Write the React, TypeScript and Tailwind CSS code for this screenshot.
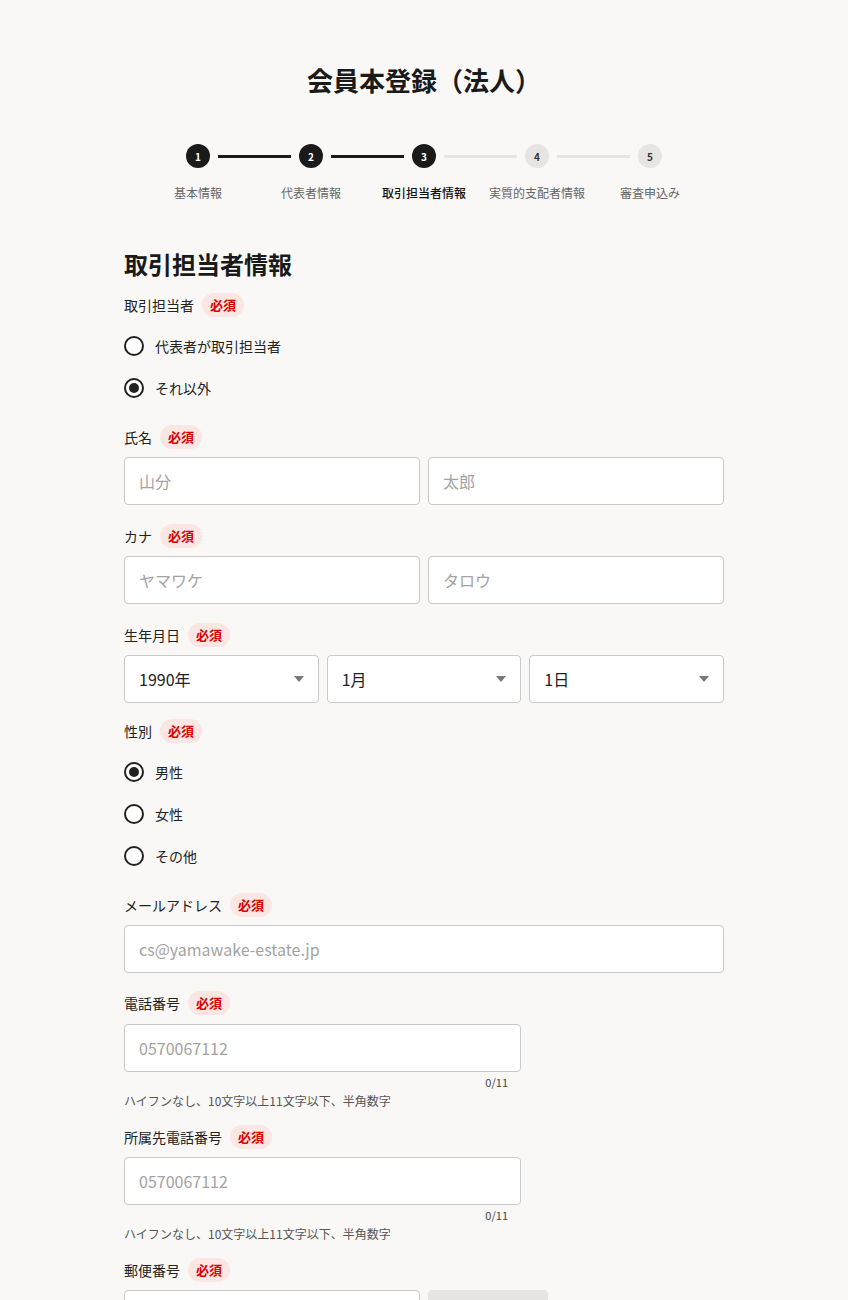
import { ReactNode } from "react";

const steps = ["基本情報", "代表者情報", "取引担当者情報", "実質的支配者情報", "審査申込み"];
const current = 3;

const Badge = () => (
  <span className="inline-flex h-6 items-center rounded-full bg-[#fbe6e4] px-2 text-[13px] font-bold text-[#d90000]">
    必須
  </span>
);

const Label = ({ children, className = "" }: { children: ReactNode; className?: string }) => (
  <div className={`flex h-6 items-center gap-2 text-[14px] text-[#222] ${className}`}>
    <span>{children}</span>
    <Badge />
  </div>
);

const Radio = ({ label, checked }: { label: string; checked?: boolean }) => (
  <label className="flex h-[42px] items-center gap-[11px] text-[14px] text-[#222]">
    <span className="flex h-5 w-5 items-center justify-center rounded-full border-2 border-[#222] bg-white">
      {checked && <span className="h-[10px] w-[10px] rounded-full bg-[#222]" />}
    </span>
    {label}
  </label>
);

const Input = ({ placeholder = "", className = "" }: { placeholder?: string; className?: string }) => (
  <div
    className={`flex h-12 items-center rounded border border-[#c9c9c9] bg-white px-[14px] text-[16px] text-[#a3a3a3] ${className}`}
  >
    {placeholder}
  </div>
);

const Select = ({ value }: { value: string }) => (
  <div className="flex h-12 flex-1 items-center justify-between rounded border border-[#c9c9c9] bg-white pl-[14px] pr-[14px] text-[16px] text-[#222]">
    <span>{value}</span>
    <svg width="10" height="6" viewBox="0 0 10 6">
      <path d="M0 0h10L5 6z" fill="#777" />
    </svg>
  </div>
);

const Counter = () => (
  <div className="mt-[3px] w-[397px] pr-[13px] text-right text-[11px] leading-[14px] text-[#444]">0/11</div>
);

const Hint = () => (
  <div className="mt-[3px] text-[12px] leading-[18px] text-[#555]">
    ハイフンなし、10文字以上11文字以下、半角数字
  </div>
);

export default function App() {
  return (
    <div
      className="min-h-[1300px] bg-[#f9f8f6] pb-20 text-[#222]"
      style={{ fontFamily: '"Noto Sans CJK JP", "Noto Sans", sans-serif' }}
    >
      <div className="pt-[62px] text-center text-[26px] font-bold leading-[36px] text-[#1a1a1a]">
        会員本登録（法人）
      </div>

      <div className="mt-[46px] flex justify-center">
        <div className="flex items-center">
          {steps.map((s, i) => {
            const n = i + 1;
            const done = n <= current;
            return (
              <div key={s} className="flex items-center">
                {i > 0 && (
                  <div
                    className={`mx-2 h-[3px] w-[73px] ${n <= current ? "bg-[#1a1a1a]" : "bg-[#e6e5e3]"}`}
                  />
                )}
                <div
                  className={`flex h-6 w-6 items-center justify-center rounded-full text-[10px] font-bold ${
                    done ? "bg-[#1a1a1a] text-white" : "bg-[#e6e5e3] text-[#333]"
                  }`}
                >
                  {n}
                </div>
              </div>
            );
          })}
        </div>
      </div>
      <div className="mt-4 flex justify-center">
        <div className="grid grid-cols-[repeat(5,113px)]">
          {steps.map((s, i) => (
            <div
              key={s}
              className={`text-center text-[12px] leading-[18px] ${
                i + 1 === current ? "font-medium text-[#111]" : "text-[#666]"
              }`}
            >
              {s}
            </div>
          ))}
        </div>
      </div>

      <div className="mx-auto w-[600px]">
        <h2 className="mt-[44px] text-[24px] font-bold leading-[36px] text-[#1a1a1a]">取引担当者情報</h2>

        <Label className="mt-[11px]">取引担当者</Label>
        <div className="mt-2">
          <Radio label="代表者が取引担当者" />
          <Radio label="それ以外" checked />
        </div>

        <Label className="mt-4">氏名</Label>
        <div className="mt-2 grid grid-cols-2 gap-2">
          <Input placeholder="山分" />
          <Input placeholder="太郎" />
        </div>

        <Label className="mt-[19px]">カナ</Label>
        <div className="mt-2 grid grid-cols-2 gap-2">
          <Input placeholder="ヤマワケ" />
          <Input placeholder="タロウ" />
        </div>

        <Label className="mt-[19px]">生年月日</Label>
        <div className="mt-2 flex gap-2">
          <Select value="1990年" />
          <Select value="1月" />
          <Select value="1日" />
        </div>

        <Label className="mt-4">性別</Label>
        <div className="mt-2">
          <Radio label="男性" checked />
          <Radio label="女性" />
          <Radio label="その他" />
        </div>

        <Label className="mt-4">メールアドレス</Label>
        <Input className="mt-2" placeholder="cs@yamawake-estate.jp" />

        <Label className="mt-[18px]">電話番号</Label>
        <Input className="mt-[9px] w-[397px]" placeholder="0570067112" />
        <Counter />
        <Hint />

        <Label className="mt-[15px]">所属先電話番号</Label>
        <Input className="mt-2 w-[397px]" placeholder="0570067112" />
        <Counter />
        <Hint />

        <Label className="mt-[15px]">郵便番号</Label>
        <div className="mt-2 flex gap-2">
          <Input className="w-[296px]" />
          <button className="h-12 w-[120px] rounded bg-[#e6e5e3]" />
        </div>
      </div>
    </div>
  );
}
